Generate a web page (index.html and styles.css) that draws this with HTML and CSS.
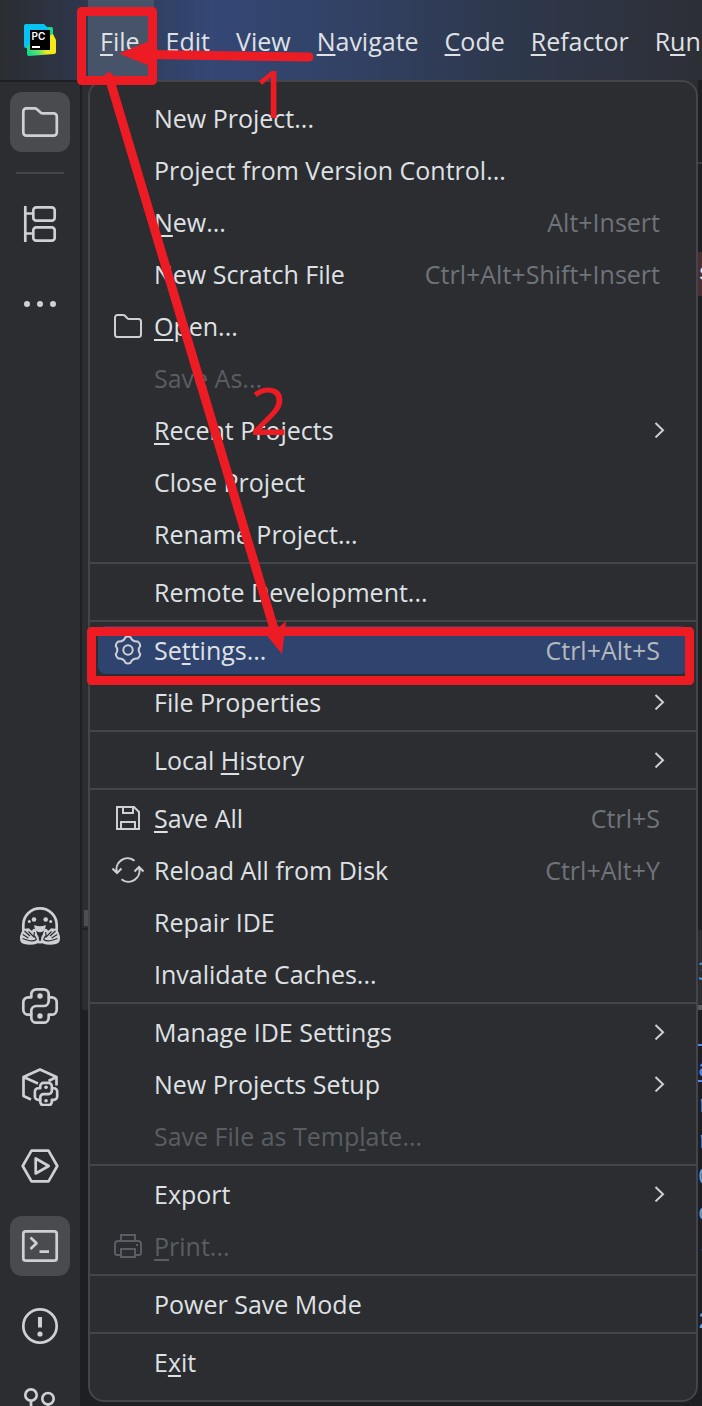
FILE: index.html
```html
<!DOCTYPE html>
<html lang="en">
<head>
    <meta charset="UTF-8">
    <meta name="viewport" content="width=device-width, initial-scale=1.0">
    <title>PyCharm - File menu</title>
    <link rel="stylesheet" href="styles.css">
</head>
<body>
    <!-- Shared icons -->
    <svg class="defs" aria-hidden="true">
        <symbol id="chevron" viewBox="0 0 16 16"><path d="M3.5 1 11 8.2 3.5 15.4"/></symbol>
        <symbol id="python" viewBox="0 0 40 40">
            <path d="M11.3 11.3v-3a5 5 0 0 1 5-5h7.4a5 5 0 0 1 5 5v3h3a5 5 0 0 1 5 5v7.4a5 5 0 0 1-5 5h-3v3a5 5 0 0 1-5 5h-7.4a5 5 0 0 1-5-5v-3h-3a5 5 0 0 1-5-5v-7.4a5 5 0 0 1 5-5z"/>
            <path d="M28.7 11.3V15a5 5 0 0 1-5 5h-7.4a5 5 0 0 0-5 5v3.7"/>
            <circle class="fill" cx="20" cy="10" r="2.7"/><circle class="fill" cx="20" cy="30" r="2.7"/>
        </symbol>
    </svg>

    <header class="menubar">
        <svg class="logo" viewBox="0 0 32 32" aria-label="PyCharm">
            <defs>
                <linearGradient id="lg" x1="0" y1="0.7" x2="1" y2="0.3">
                    <stop offset="0" stop-color="#14d98b"/><stop offset="0.3" stop-color="#5fe26a"/><stop offset="0.55" stop-color="#f0ea1c"/><stop offset="1" stop-color="#f7ec13"/>
                </linearGradient>
            </defs>
            <path fill="#21d789" d="M20 3h7.500Q29 3 29 5v9H16z"/>
            <path fill="#07c3f2" d="M2 0h18l4 4v4L8 24H2q-2 0-2-2V2Q0 0 2 0z"/>
            <path fill="url(#lg)" d="M3 22 29 10l3 6v12q0 2-2 2L5 32q-2 0-2-2z"/>
            <path fill="#000" d="M6 6h20v20H6z"/>
            <path fill="#fff" d="M8 22h8v2H8z"/>
            <text x="7.500" y="16" fill="#fff">PC</text>
        </svg>
        <nav class="menus">
            <button class="open"><u>F</u>ile</button>
            <button><u>E</u>dit</button>
            <button><u>V</u>iew</button>
            <button><u>N</u>avigate</button>
            <button><u>C</u>ode</button>
            <button><u>R</u>efactor</button>
            <button>R<u>u</u>n</button>
        </nav>
    </header>

    <main class="workspace">
        <aside class="toolbar">
            <button class="active" aria-label="Project"><svg viewBox="0 0 40 40"><path d="M3.300 9.400a3 3 0 0 1 3-3h8.500q1 0 1.800.7l4 3.500q1 .8 2 .8h11.200a3 3 0 0 1 3 3v16.200a3 3 0 0 1-3 3H6.300a3 3 0 0 1-3-3z"/></svg></button>
            <hr>
            <button aria-label="Structure"><svg viewBox="0 0 40 40"><path d="M5.300 2v36M5.300 9.500h8M5.300 29.500h8"/><rect x="13.300" y="3.300" width="21.400" height="13.400" rx="3"/><rect x="13.300" y="23.300" width="21.400" height="13.400" rx="3"/></svg></button>
            <button aria-label="More"><svg viewBox="0 0 40 40"><g class="fill"><circle cx="7" cy="20" r="3"/><circle cx="20" cy="20" r="3"/><circle cx="33" cy="20" r="3"/></g></svg></button>
            <div class="toolbar-bottom">
                <button aria-label="Hugging Face"><svg viewBox="0 0 40 40">
                    <path d="M3.300 24V19a16.700 16.700 0 0 1 33.400 0v5M15 35.500q5 1.300 10 0"/>
                    <g class="fill"><circle cx="14" cy="13.500" r="2.300"/><circle cx="25.700" cy="13.500" r="2.300"/><circle cx="9.300" cy="15.500" r="1.500"/><circle cx="30.700" cy="15.500" r="1.500"/><path d="M14.200 19q5.800 2.500 11.600 0-.3 7.300-5.800 7.300T14.200 19z"/></g>
                    <g id="hand">
                        <path class="fill" d="M1.800 25.500Q2.500 21.800 6 22.800q2.500-1.300 4.500 1l1.500 1.200q1-3.500 3.800-1.800l1.200 4.800q2.200 3 2 6.500-.5 4.300-9 4.300-7 0-9.200-2.800Q-.8 32 .5 29z"/>
                        <path class="cut" d="m8.500 25.500 5.500 5.500.3-5M4.500 25l5.500 5M2.800 28.500l5.500 3.500M2.500 32.500l4.500 1.500q6 2 9.300-.5-.5-3-2.300-3.500"/>
                    </g>
                    <use href="#hand" transform="matrix(-1 0 0 1 40 0)"/>
                </svg></button>
                <button aria-label="Python Console"><svg viewBox="0 0 40 40"><use href="#python"/></svg></button>
                <button aria-label="Python Packages"><svg viewBox="0 0 40 40"><path d="M11 33.500 3.500 30V11L20 3.500 36.500 11v8.500M3.500 11 18 17.500M36.500 11l-8 4"/><use class="small" href="#python" x="12.700" y="14.700" width="26.700" height="26.700"/></svg></button>
                <button aria-label="Services"><svg viewBox="0 0 40 40"><path d="M2.700 20 11.500 4.700h17L37.300 20l-8.800 15.300h-17zM15.700 12.500v15L28.700 20z"/></svg></button>
                <button class="active" aria-label="Terminal"><svg viewBox="0 0 40 40"><rect x="3.300" y="5.300" width="33.400" height="29.400" rx="2.500"/><path d="m10.500 11.500 6 5.800-6 5.700M19.500 25.700h9.500"/></svg></button>
                <button aria-label="Problems"><svg viewBox="0 0 40 40"><circle cx="20" cy="20" r="16.700"/><path class="thick" d="M20 11v10.500"/><circle class="fill" cx="20" cy="28" r="2.600"/></svg></button>
                <button aria-label="Version Control"><svg viewBox="0 0 40 40"><circle cx="11" cy="9" r="5.700"/><circle cx="28" cy="12.700" r="5.700"/><circle cx="11" cy="32" r="5"/><path d="M11 15v12M28 19q0 7-12 9"/></svg></button>
            </div>
        </aside>

        <div class="panes">
            <div class="upper">
                <div class="project-pane"><span class="scroll-thumb"></span></div>
                <div class="editor-pane"><div class="tabs"></div><code>s</code></div>
            </div>
            <div class="lower">
                <div class="tool-head"></div>
                <div class="console">
                    <div class="console-tab">3</div>
                    <pre><a href="#"> 
a</a>
r
r
0
c
-

2</pre>
                </div>
            </div>
        </div>
    </main>

    <div class="file-menu" role="menu">
        <button role="menuitem"><span class="icon"></span>New Project...</button>
        <button role="menuitem"><span class="icon"></span>Project from Version Control...</button>
        <button role="menuitem"><span class="icon"></span><span><u>N</u>ew...</span><kbd>Alt+Insert</kbd></button>
        <button role="menuitem"><span class="icon"></span>New Scratch File<kbd>Ctrl+Alt+Shift+Insert</kbd></button>
        <button role="menuitem"><svg class="icon" viewBox="0 0 32 32"><path d="M3 7.500A2.500 2.500 0 0 1 5.500 5H11q1 0 1.700.6l2.600 2.600q.8.8 2 .8h9.200a2.500 2.500 0 0 1 2.500 2.500v13a2.500 2.500 0 0 1-2.500 2.500h-21A2.500 2.500 0 0 1 3 24.500z"/></svg><span><u>O</u>pen...</span></button>
        <button role="menuitem" disabled><span class="icon"></span>Save As...</button>
        <button role="menuitem" class="sub"><span class="icon"></span><span><u>R</u>ecent Projects</span><svg class="chevron"><use href="#chevron"/></svg></button>
        <button role="menuitem"><span class="icon"></span>Close Project</button>
        <button role="menuitem"><span class="icon"></span>Rename Project...</button>
        <hr>
        <button role="menuitem"><span class="icon"></span>Remote Development...</button>
        <hr>
        <button role="menuitem" class="selected"><svg class="icon" viewBox="0 0 32 32"><path d="M13.500 3.200q2.500-1.200 5 0Q20.300 8 25.800 7.500q2 1.400 2.500 4.300-3.300 4.200 0 8.400-.5 2.900-2.500 4.300-5.500-.5-7.300 4.300-2.500 1.200-5 0-1.800-4.800-7.300-4.300-2-1.400-2.500-4.300 3.300-4.200 0-8.400.5-2.900 2.500-4.300 5.500.5 7.300-4.300z"/><circle cx="16" cy="16" r="4.700"/></svg><span>Se<u>t</u>tings...</span><kbd>Ctrl+Alt+S</kbd></button>
        <button role="menuitem" class="sub"><span class="icon"></span>File Properties<svg class="chevron"><use href="#chevron"/></svg></button>
        <hr>
        <button role="menuitem" class="sub"><span class="icon"></span><span>Local <u>H</u>istory</span><svg class="chevron"><use href="#chevron"/></svg></button>
        <hr>
        <button role="menuitem"><svg class="icon" viewBox="0 0 32 32"><path d="M5 5h17l5 5v17H5zM11 5v6h10V5M9 27v-7h14v7"/></svg><span><u>S</u>ave All</span><kbd>Ctrl+S</kbd></button>
        <button role="menuitem"><svg class="icon" viewBox="0 0 32 32"><path d="M22.500 6.800A11 11 0 0 0 5 18.500M.5 14.500l4.500 4.500 4.500-4.500M9.500 25.200A11 11 0 0 0 27 13.500M22.500 17.500 27 13l4.500 4.500"/></svg>Reload All from Disk<kbd>Ctrl+Alt+Y</kbd></button>
        <button role="menuitem"><span class="icon"></span>Repair IDE</button>
        <button role="menuitem"><span class="icon"></span>Invalidate Caches...</button>
        <hr>
        <button role="menuitem" class="sub"><span class="icon"></span>Manage IDE Settings<svg class="chevron"><use href="#chevron"/></svg></button>
        <button role="menuitem" class="sub"><span class="icon"></span>New Projects Setup<svg class="chevron"><use href="#chevron"/></svg></button>
        <button role="menuitem" disabled><span class="icon"></span><span>Save File as Temp<u>l</u>ate...</span></button>
        <hr>
        <button role="menuitem" class="sub"><span class="icon"></span>Export<svg class="chevron"><use href="#chevron"/></svg></button>
        <button role="menuitem" disabled><svg class="icon" viewBox="0 0 32 32"><path d="M9 25H5a2 2 0 0 1-2-2v-9a3 3 0 0 1 3-3h20a3 3 0 0 1 3 3v9a2 2 0 0 1-2 2h-4M9 11V5h14v6M9 19h14v8H9zM25 14v2"/></svg><span><u>P</u>rint...</span></button>
        <hr>
        <button role="menuitem"><span class="icon"></span>Power Save Mode</button>
        <hr>
        <button role="menuitem"><span class="icon"></span><span>E<u>x</u>it</span></button>
    </div>

    <!-- Step marks drawn over the menu -->
    <svg class="marks" width="702" height="700" viewBox="0 0 702 700">
        <rect x="81.500" y="11.500" width="71" height="69"/>
        <rect x="91.500" y="631.500" width="598" height="49"/>
        <path d="M309 57 150 54.500M109 77 275 632"/>
        <path class="head" d="M119 53.500 157 38v31zM282 654l-18-22 11-1 11-10z"/>
        <text x="253" y="118">1</text>
        <text x="250" y="435">2</text>
    </svg>
</body>
</html>
```

FILE: styles.css
```css
* {
    box-sizing: border-box;
}

body {
    margin: 0;
    height: 100vh;
    display: flex;
    flex-direction: column;
    position: relative;
    overflow: hidden;
    background-color: #1e1f22;
    color: #dfe1e5;
    font-family: "Open Sans", "Noto Sans", sans-serif;
    font-size: 25px;
}

button {
    background: none;
    border: none;
    padding: 0;
    color: inherit;
    font: inherit;
    white-space: nowrap;
}

u {
    text-decoration-thickness: 2px;
    text-underline-offset: 3px;
    text-decoration-skip-ink: none;
}

svg {
    fill: none;
    stroke: #ced0d6;
    stroke-width: 2;
}

.defs {
    display: none;
}

.fill {
    fill: #ced0d6;
    stroke: none;
}

/* Menu bar */
.menubar {
    height: 80px;
    flex-shrink: 0;
    display: flex;
    background: linear-gradient(90deg, #2b2d30 0%, #2e3a54 15%, #344775 30%, #324266 48%, #2e384c 72%, #2d2f36 100%);
}

.logo {
    width: 32px;
    height: 32px;
    margin: 24px 32px 0 24px;
    flex-shrink: 0;
    stroke: none;
}

.logo text {
    font-family: Inter, sans-serif;
    font-size: 10px;
    font-weight: 600;
}

.menus {
    display: flex;
}

.menus button {
    padding: 2px 14px 0 12px;
}

.menus .open {
    background-color: #475369;
}

/* Tool window bar */
.workspace {
    flex: 1;
    min-height: 0;
    display: flex;
}

.toolbar {
    width: 82px;
    flex-shrink: 0;
    padding: 10px;
    display: flex;
    flex-direction: column;
    gap: 20px;
    background-color: #2b2d30;
    border-top: 2px solid #1e1f22;
    border-right: 2px solid #1e1f22;
}

.toolbar button {
    width: 60px;
    height: 60px;
    flex-shrink: 0;
    display: flex;
    align-items: center;
    justify-content: center;
    border-radius: 12px;
}

.toolbar .active {
    background-color: #4a4b4e;
}

.toolbar hr {
    width: 48px;
    height: 2px;
    margin: 0 6px;
    border: none;
    background-color: #43454a;
}

.toolbar svg {
    width: 40px;
    height: 40px;
    stroke-width: 2.7;
    stroke-linejoin: round;
}

.toolbar .small {
    stroke-width: 4;
}

.toolbar .cut {
    stroke: #2b2d30;
    stroke-width: 1.2;
}

.toolbar .thick {
    stroke-width: 4;
}

.toolbar-bottom {
    display: flex;
    flex-direction: column;
    gap: 20px;
    margin-top: auto;
    margin-bottom: -40px;
}

/* Panes behind the menu */
.panes {
    flex: 1;
    min-width: 0;
    display: flex;
    flex-direction: column;
}

.upper {
    flex: 1;
    display: flex;
}

.project-pane {
    flex: 1;
    display: flex;
    align-items: flex-end;
    padding: 0 2px 2px;
    background-color: #2b2d30;
    border-bottom: 2px solid #1e1f22;
}

.scroll-thumb {
    width: 100%;
    height: 16px;
    background-color: #4d4e51;
}

.editor-pane {
    width: 4px;
    overflow: hidden;
}

.tabs {
    height: 84px;
    margin-bottom: 88px;
    border-bottom: 2px solid #393b40;
}

.editor-pane code {
    display: block;
    background-color: #4b2c2f;
    line-height: 44px;
    font-family: "Liberation Mono", monospace;
    font-size: 24px;
}

.lower {
    height: 476px;
    display: flex;
}

.tool-head {
    flex: 1;
    height: 80px;
    background-color: #2b2d30;
}

.console {
    width: 4px;
    overflow: hidden;
}

.console-tab {
    height: 80px;
    line-height: 80px;
    background-color: #2b2d30;
    border-bottom: 5px solid #5a5b5e;
    color: #4b9fd5;
}

.console pre {
    margin: 6px 0 0;
    color: #6a9fd8;
    font-family: "Liberation Mono", monospace;
    font-size: 24px;
    line-height: 36px;
}

.console a {
    color: #548af7;
    text-decoration-thickness: 2px;
    text-underline-offset: 4px;
}

/* File menu */
.file-menu {
    position: absolute;
    top: 80px;
    left: 88px;
    right: 4px;
    padding: 10px 0;
    background-color: #2b2d30;
    border: 2px solid #43454a;
    border-radius: 16px;
}

.file-menu button {
    display: flex;
    align-items: center;
    width: calc(100% - 16px);
    height: 48px;
    margin: 2px 8px 4px;
    padding: 0 28px 0 14px;
    border-radius: 8px;
}

.file-menu .sub {
    padding-right: 20px;
}

.file-menu .selected {
    background-color: #2e436e;
}

.file-menu button:disabled {
    color: #5a5d63;
}

.file-menu button:disabled svg {
    stroke: #5a5d63;
}

.file-menu hr {
    height: 2px;
    margin: 0 0 4px;
    border: none;
    background-color: #43454a;
}

.icon {
    width: 32px;
    height: 32px;
    margin-right: 10px;
    flex-shrink: 0;
}

.chevron {
    width: 16px;
    height: 16px;
    margin-left: auto;
}

kbd {
    margin-left: auto;
    color: #6f737a;
    font-family: inherit;
}

.selected kbd {
    color: #b4b8bf;
}

/* Step marks */
.marks {
    position: absolute;
    top: 0;
    left: 0;
    pointer-events: none;
    stroke: #ed1c24;
    stroke-width: 9;
    stroke-linejoin: round;
    stroke-linecap: round;
}

.marks .head,
.marks text {
    fill: #ed1c24;
    stroke: none;
}

.marks text {
    font-family: "Noto Sans", sans-serif;
    font-size: 66px;
}
```
